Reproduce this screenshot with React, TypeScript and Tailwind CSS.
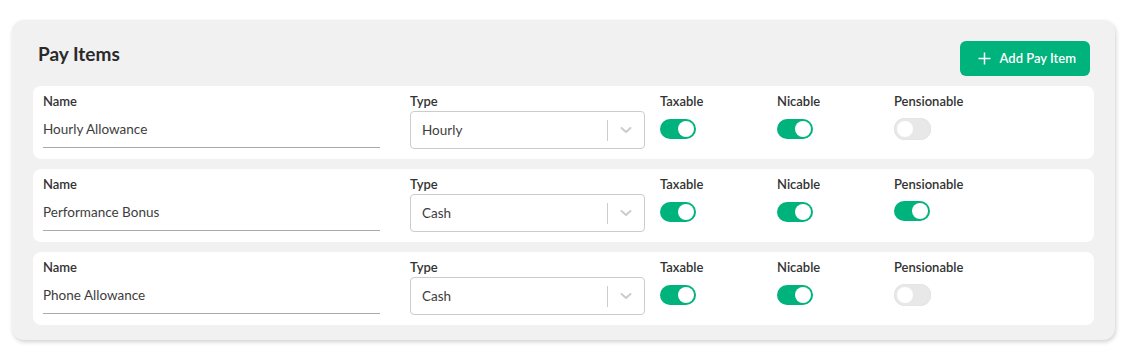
import React from 'react';

type PayItem = {
  name: string;
  type: string;
  taxable: boolean;
  nicable: boolean;
  pensionable: boolean;
};

const items: PayItem[] = [
  { name: 'Hourly Allowance', type: 'Hourly', taxable: true, nicable: true, pensionable: false },
  { name: 'Performance Bonus', type: 'Cash', taxable: true, nicable: true, pensionable: true },
  { name: 'Phone Allowance', type: 'Cash', taxable: true, nicable: true, pensionable: false },
];

function Toggle({ on }: { on: boolean }) {
  return on ? (
    <div className="flex h-[20px] w-[36px] items-center justify-end rounded-full bg-[#00b27b] px-[2px]">
      <div className="h-[16px] w-[16px] rounded-full bg-white" />
    </div>
  ) : (
    <div className="flex h-[22px] w-[37px] items-center justify-start rounded-full bg-[#e8e8e8] px-[3px] shadow-[inset_0_0_1px_rgba(0,0,0,0.15)]">
      <div className="h-[16px] w-[16px] rounded-full bg-white" />
    </div>
  );
}

function Label({ children }: { children: React.ReactNode }) {
  return <div className="h-[16px] text-[13px] leading-[16px] font-semibold text-[#333]">{children}</div>;
}

function Row({ item }: { item: PayItem }) {
  return (
    <div className="flex rounded-lg bg-white pl-[10px] pt-[7px] pb-[10px]">
      <div className="w-[337px]">
        <Label>Name</Label>
        <div className="mt-[2px] flex h-[37px] items-center border-b border-[#aaa] text-[13.5px] text-[#3d3d3d]">
          {item.name}
        </div>
      </div>
      <div className="ml-[30px] w-[235px]">
        <Label>Type</Label>
        <div className="mt-[2px] flex h-[38px] items-center rounded border border-[#ccc] pl-[11px] text-[13.5px] text-[#3d3d3d]">
          <span className="flex-1">{item.type}</span>
          <div className="h-[21px] w-px bg-[#ccc]" />
          <div className="flex w-[36px] items-center justify-center">
            <svg width="12" height="8" viewBox="0 0 12 8" fill="none" stroke="#cccccc" strokeWidth="2" strokeLinecap="round" strokeLinejoin="round">
              <path d="M1.5 2l4.5 4 4.5-4" />
            </svg>
          </div>
        </div>
      </div>
      <div className="ml-[15px] w-[117px]">
        <Label>Taxable</Label>
        <div className="mt-[10px]"><Toggle on={item.taxable} /></div>
      </div>
      <div className="w-[117px]">
        <Label>Nicable</Label>
        <div className="mt-[10px]"><Toggle on={item.nicable} /></div>
      </div>
      <div className="w-[117px]">
        <Label>Pensionable</Label>
        <div className="mt-[9px]"><Toggle on={item.pensionable} /></div>
      </div>
    </div>
  );
}

export default function App() {
  return (
    <div className="h-[352px] w-[1123px] bg-white pt-[20px] pl-[12px] font-['Lato',sans-serif]">
      <div className="w-[1103px] rounded-xl bg-[#f1f1f1] px-[21px] pt-[21px] pb-[15px] shadow-[1px_2px_4px_rgba(0,0,0,0.18)]">
        <div className="flex items-start justify-between pr-[4px]">
          <h1 className="mt-[1px] pl-[5px] text-[19px] leading-[24px] font-bold text-[#2a2a2a]">Pay Items</h1>
          <button className="flex h-[35px] items-center gap-[9px] rounded-md bg-[#00b27b] pl-[18px] pr-[14px] text-[13px] font-semibold text-white">
            <svg width="13" height="13" viewBox="0 0 13 13" stroke="white" strokeWidth="1.5">
              <path d="M6.5 0.5v12M0.5 6.5h12" />
            </svg>
            Add Pay Item
          </button>
        </div>
        <div className="mt-[10px] flex flex-col gap-[10px]">
          {items.map((item) => (
            <Row key={item.name} item={item} />
          ))}
        </div>
      </div>
    </div>
  );
}
